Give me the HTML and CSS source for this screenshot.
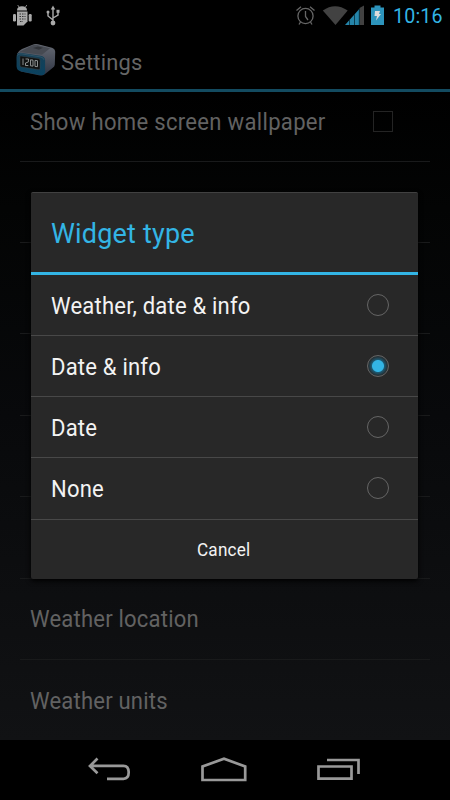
FILE: index.html
```
<!DOCTYPE html>
<html lang="en">
<head>
<meta charset="utf-8">
<title>Settings</title>
<link rel="stylesheet" href="styles.css">
</head>
<body>
<div class="phone">
  <header class="status">
    <svg class="status-left" width="60" height="30" viewBox="0 0 60 30">
      <g fill="#aaa" stroke="#aaa">
        <path d="M17 10.500c0-3 2-4.200 5-4.200s5 1.200 5 4.200z" stroke="none"/>
        <path d="M19 7l-1.300-2M25.500 7l1.300-2" stroke-width=".8"/>
        <path d="M17 11.500h10.500v10l-4 4h-6.500z" stroke="none"/>
        <rect x="13" y="14" width="3" height="7.500" rx="1.200" stroke="none"/>
        <rect x="28.700" y="14" width="3" height="7.500" rx="1.200" stroke="none"/>
        <path d="M19.500 14h6M19.500 16.500h6M19.500 19h6M20 21.500h3" fill="none" stroke="#333" stroke-width="1.200" stroke-dasharray="1.500 1"/>
        <path d="M53 8v15M53 20l-5-4v-4M53 18l5-3v-4" fill="none" stroke-width="1.400"/>
        <path d="M50.800 9.500L53 5.500l2.200 4z" stroke="none"/>
        <circle cx="53" cy="23" r="2.400" stroke="none"/>
        <circle cx="48" cy="12" r="1.500" stroke="none"/>
        <rect x="56.500" y="9.800" width="3" height="3" stroke="none"/>
      </g>
    </svg>
    <svg class="status-right" width="92" height="30" viewBox="294 0 92 30">
      <g fill="none" stroke="#666" stroke-width="1.300">
        <circle cx="305.500" cy="16" r="7.600"/>
        <path d="M305.500 11v5.500l2.500 3.500M296.500 10.500l4.500-3.700M314.500 10.500l-4.500-3.700"/>
        <path d="M300.500 22l-1.500 2.500M310.500 22l1.500 2.500"/>
      </g>
      <path d="M322.800 10.500Q335 2 347.700 10.500L335.500 25z" fill="#424242"/>
      <path d="M359.500 8l4.500-2.500V25h-4.500z" fill="#424242"/>
      <path d="M345 25l14.300-16V25z" fill="#2585aa"/>
      <path d="M349.500 20v5M354.500 14v11M359.300 9v16" stroke="#0a3445" stroke-width=".9"/>
      <path d="M371 7.500h3.500v-2h6v2h3.500V25h-13z" fill="#2d94bc"/>
      <path d="M375 11h5l-1 3h2l-5 6.500 1-4.500h-2.500z" fill="#ddd"/>
    </svg>
    <span class="clock"><span class="t">10:16</span></span>
  </header>
  <div class="actionbar">
    <svg class="app-icon" width="42" height="36" viewBox="15 43 42 36">
      <defs>
        <linearGradient id="side" x1="0" y1="0" x2="0" y2="1"><stop offset="0" stop-color="#666a73"/><stop offset="1" stop-color="#2e3443"/></linearGradient>
        <linearGradient id="face" x1="0" y1="0" x2="0" y2="1"><stop offset="0" stop-color="#173f55"/><stop offset="1" stop-color="#0a4260"/></linearGradient>
      </defs>
      <path d="M17 55q1-3 5-5l10-4q3-1.500 6-.7l14 3.500q3 1 3.200 4l-.4 13q-.2 2-2 3l-8 6.500q-2 1.500-5 1.200l-19-4z" fill="url(#side)"/>
      <path d="M19 53l13-6.500q2-1 5-.5l13 3.200-8 6.500z" fill="#464a52"/>
      <path d="M33 49l5-1.500 5 1.300-4 2z" fill="#303338"/>
      <path d="M16.500 58q0-4.500 4-4.300l20 3q4.500.7 4.600 4.300v11q0 4.500-4 4.300l-20-3.800q-4.400-1-4.500-5z" fill="url(#face)"/>
      <path d="M17.500 56.500q1-2 3.500-1.700l19 3q3.500.5 4 3" fill="none" stroke="#36586a" stroke-width=".8"/>
      <path d="M20.500 57l18 2.500q1.500.3 1.500 1.800v8q0 1.500-1.500 1.300l-17-2.600q-1.500-.3-1.500-1.800v-8q0-1.300.5-1.200z" fill="#101212" stroke="#3c4549" stroke-width=".5"/>
      <path d="M23 59.500v6.500M25.500 60h3l-.2 3-2.800 1v2.500h2.800M30.500 60.800l2.500.3v6l-2.500-.3zM35 61.400l2.500.3v6l-2.500-.3z" fill="none" stroke="#9a9d9d" stroke-width=".9"/>
    </svg>
    <h1 class="screen-title"><span class="t">Settings</span></h1>
  </div>
  <main class="prefs">
    <div class="pref first"><span class="t show">Show home screen wallpaper</span><i class="checkbox"></i></div>
    <div class="pref"></div>
    <div class="pref tall"></div>
    <div class="pref"></div>
    <div class="pref"></div>
    <div class="pref"></div>
    <div class="pref"><span class="t">Weather location</span></div>
    <div class="pref"><span class="t">Weather units</span></div>
  </main>
  <nav class="nav">
    <svg width="450" height="60" viewBox="0 740 450 60" fill="none" stroke="#999" stroke-width="2.700">
      <path d="M97.500 758.500l-7.500 7.500 7.500 7.200M91 765.800h32.500q5.200 0 5.200 6.500t-5.200 6.500H107"/>
      <path d="M202.500 780v-13.500l21.500-7.800 21.200 7.800V780z"/>
      <path d="M318.500 766.500h33v12.200h-33z M327 760h31.500v14"/>
    </svg>
  </nav>
</div>
<section class="dialog">
  <h2 class="dialog-title"><span class="t">Widget type</span></h2>
  <div class="option"><span class="t">Weather, date &amp; info</span><i class="radio"></i></div>
  <div class="option"><span class="t">Date &amp; info</span><i class="radio on"></i></div>
  <div class="option"><span class="t">Date</span><i class="radio"></i></div>
  <div class="option last"><span class="t">None</span><i class="radio"></i></div>
  <div class="cancel"><span class="t">Cancel</span></div>
</section>
</body>
</html>
```
FILE: styles.css
```
* { box-sizing: border-box; }
body { margin: 0; background: #000; font-family: Roboto, sans-serif; overflow: hidden; }
.t { display: inline-block; white-space: nowrap; transform: scale(.98, 1.025); transform-origin: 0 60%; letter-spacing: .2px; }
.phone { width: 450px; height: 800px; display: flex; flex-direction: column; }
.status { height: 31px; display: flex; color: #33b5e5; }
.status-right { margin-left: 234px; }
.clock { margin-left: 7px; font-size: 20px; line-height: 32px; }
.actionbar { height: 61px; display: flex; align-items: center; padding-left: 15px; border-bottom: 3px solid #134b60; }
.screen-title { margin: 3px 0 0 4px; font-size: 22.3px; font-weight: 400; color: #666; }
.prefs { height: 648px; padding: 0 20px; background: linear-gradient(#000, #030404 18%, #08090b 50%, #111214); overflow: hidden; }
.pref { height: 81.4px; padding: 0 37px 0 10px; border-bottom: 1px solid #191a1b; display: flex; align-items: center; justify-content: space-between; font-size: 22.5px; color: #626262; }
.pref.first { height: 70px; padding-bottom: 10px; }
.pref.tall { height: 91px; }
.pref:last-child { border: 0; }
.show { letter-spacing: .32px; }
.checkbox { width: 20px; height: 21px; border: 1px solid #242424; }
.nav { height: 60px; background: #000; }
.nav svg { display: block; }
.dialog { position: absolute; left: 31px; top: 192px; width: 387px; height: 387px; background: #282828; border-top: 1px solid #414141; border-radius: 2px; box-shadow: 0 2px 5px #000; color: #f3f3f3; }
.dialog-title { margin: 0; height: 82px; padding-left: 20px; border-bottom: 3px solid #33b5e5; font-size: 27.5px; line-height: 81px; font-weight: 400; color: #33b5e5; }
.option { height: 61px; padding: 0 29px 1px 20px; border-bottom: 1px solid #484848; display: flex; align-items: center; justify-content: space-between; font-size: 22.5px; }
.option .t { position: relative; top: 1px; }
.option.last { height: 62px; }
.radio { width: 22px; height: 22px; border: 1px solid #656565; border-radius: 50%; }
.radio.on { background: radial-gradient(circle, #33b5e5 0 5.500px, #1d5870 6.500px, #25353c 9px, #282828 11px); }
.cancel { height: 60px; display: flex; align-items: center; justify-content: center; font-size: 17.5px; }
```
